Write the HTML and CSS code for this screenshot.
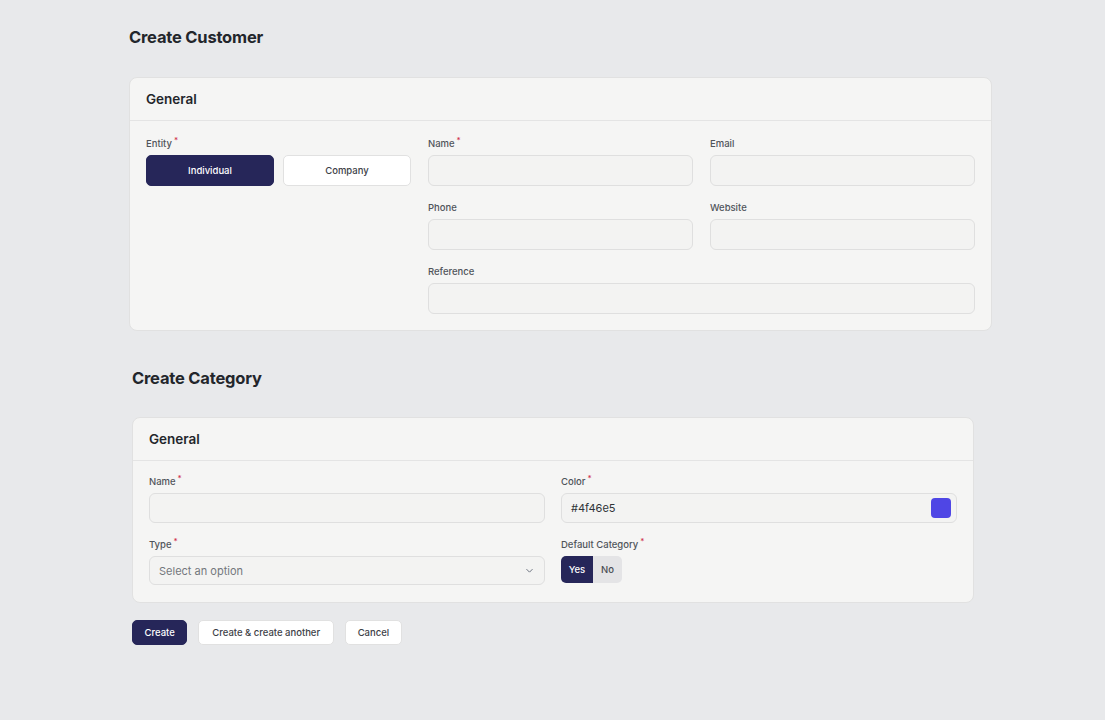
FILE: index.html
```html
<!DOCTYPE html>
<html>
<head>
<meta charset="utf-8">
<link rel="stylesheet" href="styles.css">
</head>
<body>
<section class="section s1">
  <h1 class="title">Create Customer</h1>
  <div class="card">
    <div class="card-head">General</div>
    <div class="card-body grid3">
      <div class="field">
        <label class="lbl">Entity<span class="req">*</span></label>
        <div class="seg">
          <button class="seg-btn active">Individual</button>
          <button class="seg-btn">Company</button>
        </div>
      </div>
      <div class="field">
        <label class="lbl">Name<span class="req">*</span></label>
        <div class="input"></div>
      </div>
      <div class="field">
        <label class="lbl">Email</label>
        <div class="input"></div>
      </div>
      <div class="field c2">
        <label class="lbl">Phone</label>
        <div class="input"></div>
      </div>
      <div class="field">
        <label class="lbl">Website</label>
        <div class="input"></div>
      </div>
      <div class="field c2 span2">
        <label class="lbl">Reference</label>
        <div class="input"></div>
      </div>
    </div>
  </div>
</section>

<section class="section s2">
  <h1 class="title">Create Category</h1>
  <div class="card">
    <div class="card-head">General</div>
    <div class="card-body grid2">
      <div class="field">
        <label class="lbl">Name<span class="req">*</span></label>
        <div class="input h30"></div>
      </div>
      <div class="field">
        <label class="lbl">Color<span class="req">*</span></label>
        <div class="input h30 color-input"><span class="val">#4f46e5</span><span class="swatch"></span></div>
      </div>
      <div class="field">
        <label class="lbl">Type<span class="req">*</span></label>
        <div class="input h29 select"><span class="ph">Select an option</span>
          <svg class="chev" width="11" height="11" viewBox="0 0 20 20"><path d="M5 8l5 5 5-5" fill="none" stroke="#6b7280" stroke-width="1.8" stroke-linecap="round" stroke-linejoin="round"/></svg>
        </div>
      </div>
      <div class="field">
        <label class="lbl">Default Category<span class="req">*</span></label>
        <div class="toggle"><span class="t-yes">Yes</span><span class="t-no">No</span></div>
      </div>
    </div>
  </div>
  <div class="actions">
    <button class="btn primary">Create</button>
    <button class="btn wide">Create &amp; create another</button>
    <button class="btn">Cancel</button>
  </div>
</section>
</body>
</html>
```

FILE: styles.css
```css
* { box-sizing: border-box; }
body {
  margin: 0;
  background: #e8e9eb;
  font-family: Inter, "Noto Sans", sans-serif;
  color: #1f2328;
}
.section { display: flex; flex-direction: column; }
.s1 { margin: 25px 0 0 129px; width: 863px; }
.s2 { margin: 35px 0 0 132px; width: 842px; }
.title {
  margin: 0;
  font-size: 16.5px;
  line-height: 24px;
  font-weight: 700;
  color: #23262b;
  letter-spacing: -0.2px;
}
.s1 .title { margin-bottom: 28px; }
.s2 .title { margin-bottom: 27px; }
.card {
  background: #f5f5f4;
  border: 1px solid #e1e1e1;
  border-radius: 8px;
}
.card-head {
  height: 43px;
  padding: 0 16px;
  display: flex;
  align-items: center;
  font-size: 13.5px;
  font-weight: 600;
  color: #23262b;
  border-bottom: 1px solid #e4e4e4;
}
.card-body { padding: 16px 16px 16px; display: grid; }
.grid3 { grid-template-columns: repeat(3, 1fr); column-gap: 17px; row-gap: 15px; }
.grid2 { grid-template-columns: 1fr 1fr; column-gap: 16px; row-gap: 15px; padding-top: 14px; padding-bottom: 17px; }
.c2 { grid-column-start: 2; }
.span2 { grid-column-end: span 2; }
.field { display: flex; flex-direction: column; gap: 4px; }
.lbl {
  display: block;
  height: 14px;
  font-size: 9.5px;
  line-height: 14px;
  color: #50545a;
  font-weight: 500;
}
.req { color: #d0314a; font-size: 8px; line-height: 0; position: relative; top: -4px; margin-left: 2px; }
.input {
  height: 31px;
  border: 1px solid #dfdfdf;
  border-radius: 6px;
  background: #f3f3f2;
}
.h30 { height: 30px; }
.h29 { height: 29px; }
.seg { display: flex; gap: 9px; }
.seg-btn {
  flex: 1;
  height: 31px;
  border-radius: 5px;
  border: 1px solid #e1e1e1;
  background: #ffffff;
  font-family: inherit;
  font-size: 9.5px;
  font-weight: 500;
  color: #3d4147;
}
.seg-btn.active { background: #262659; border-color: #262659; color: #fff; }
.color-input { display: flex; align-items: center; justify-content: space-between; padding: 0 5px 0 9px; }
.val { font-size: 11px; color: #2f3338; }
.swatch { width: 20px; height: 20px; border-radius: 4px; background: #4f46e5; }
.select { display: flex; align-items: center; justify-content: space-between; padding: 0 9px 0 9px; }
.ph { font-size: 11px; color: #73777d; }
.toggle {
  display: flex;
  width: 61px;
  height: 27px;
  border-radius: 5px;
  overflow: hidden;
  font-size: 9.5px;
  font-weight: 500;
}
.t-yes { width: 32px; background: #262659; color: #fff; display: flex; align-items: center; justify-content: center; }
.t-no { flex: 1; background: #e4e4e6; color: #4a4e54; display: flex; align-items: center; justify-content: center; }
.actions { display: flex; gap: 11px; margin-top: 17px; }
.btn {
  height: 25px;
  padding: 0 11.5px;
  border-radius: 5px;
  border: 1px solid #e1e1e1;
  background: #fff;
  font-family: inherit;
  font-size: 9.5px;
  font-weight: 500;
  color: #3d4147;
}
.btn.wide { padding: 0 13px; }
.btn.primary { background: #262659; border-color: #262659; color: #fff; }
```
